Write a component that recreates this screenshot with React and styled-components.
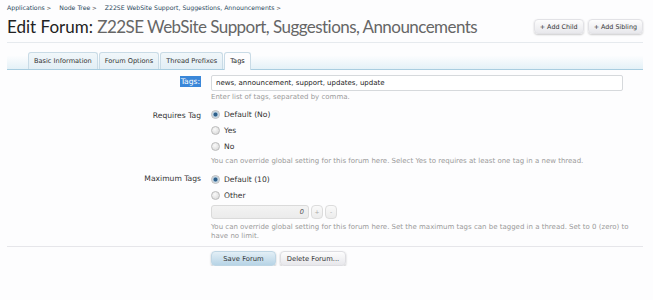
import React from "react";
import styled, { createGlobalStyle } from "styled-components";

const Global = createGlobalStyle`
  html, body { margin: 0; padding: 0; background: #fdfdfe; }
  body { font-family: "DejaVu Sans", Verdana, sans-serif; color: #222; }
`;

const Page = styled.div`
  padding: 3px 10px 0 7px;
  width: 636px;
`;

const Crumbs = styled.div`
  display: flex;
  gap: 8px;
  font-size: 6.2px;
  line-height: 10px;
  color: #2b485c;
`;

const Crumb = styled.span`
  &::after { content: " >"; font-size: 5.6px; color: #555; }
`;

const TitleBar = styled.div`
  display: flex;
  align-items: flex-start;
  justify-content: space-between;
  margin-top: 3px;
  padding-bottom: 5px;
  border-bottom: 1px solid #e6eaee;
`;

const Title = styled.h1`
  margin: 0;
  font-family: Lato, "Open Sans", sans-serif;
  font-weight: 400;
  font-size: 17px;
  line-height: 21px;
  color: #666;
  b { font-weight: 400; color: #222; }
  span { letter-spacing: -0.55px; }
`;

const TopButtons = styled.div`
  display: flex;
  gap: 4px;
  margin-top: 3px;
`;

const SmallButton = styled.button`
  font-family: "DejaVu Sans", sans-serif;
  font-size: 6.4px;
  color: #333;
  height: 15px;
  padding: 0 5px;
  border: 1px solid #e2e2e6;
  border-radius: 4px;
  background: linear-gradient(#fdfdfd, #e8e8ec);
  box-shadow: 0 1px 2px rgba(0,0,0,0.2);
`;

const Tabs = styled.div`
  display: flex;
  align-items: flex-end;
  gap: 1px;
  margin-top: 9px;
  padding-left: 21px;
  height: 17px;
  border-bottom: 1px solid #a9cde0;
  background: linear-gradient(#fdfdfe 20%, #e4f1f7);
`;

const Tab = styled.div`
  font-size: 6.6px;
  padding: 0 5px;
  border: 1px solid #c9dbe6;
  border-bottom: none;
  border-radius: 3px 3px 0 0;
  color: ${p => (p.$active ? "#222" : "#333")};
  background: ${p => (p.$active ? "#fdfdfe" : "linear-gradient(#f1f7fa, #e2eef5)")};
  margin-bottom: ${p => (p.$active ? "-1px" : "0")};
  height: ${p => (p.$active ? "17px" : "16px")};
  line-height: ${p => (p.$active ? "17px" : "16px")};
`;

const Form = styled.div`
  display: grid;
  grid-template-columns: 194px 1fr;
  column-gap: 10px;
  margin-top: 5px;
`;

const Label = styled.div`
  text-align: right;
  font-size: 7.6px;
  color: #333;
  padding-top: ${p => p.$pt || 0}px;
  line-height: 12px;
`;

const Selected = styled.span`
  background: #3a87d9;
  color: #fff;
  padding: 1px 1px;
`;

const Controls = styled.div`
  display: flex;
  flex-direction: column;
  padding-right: 20px;
  margin-top: ${p => p.$mt || 0}px;
`;

const TextInput = styled.div`
  height: 14px;
  border: 1px solid #d6d9dc;
  border-radius: 2px;
  background: #fff;
  font-size: 7px;
  line-height: 14px;
  padding-left: 4px;
  color: #222;
`;

const Hint = styled.div`
  font-size: 7px;
  line-height: 9px;
  color: #9a9a9a;
  margin-top: ${p => p.$mt || 0}px;
  margin-right: -14px;
`;

const Radio = styled.div`
  display: flex;
  align-items: center;
  gap: 4px;
  height: 16px;
  font-size: 7.6px;
  color: #333;
`;

const Dot = styled.span`
  width: 7px;
  height: 7px;
  border-radius: 50%;
  border: 1px solid #bbb;
  background: ${p =>
    p.$on
      ? "radial-gradient(circle, #2d5f8a 0 1.6px, #9ab6cc 2.2px, #e4ecf2 3.5px)"
      : "radial-gradient(circle at 40% 35%, #fafafa, #d4d4d4)"};
`;

const Spinner = styled.div`
  display: flex;
  align-items: center;
  gap: 2px;
  height: 14px;
  margin-top: 2px;
`;

const NumberBox = styled.div`
  width: 92px;
  height: 12px;
  border: 1px solid #dadada;
  border-radius: 3px;
  background: linear-gradient(#f3f3f3, #ebebeb);
  font-size: 6.6px;
  font-style: italic;
  color: #555;
  text-align: right;
  padding-right: 4px;
  line-height: 12px;
`;

const SpinBtn = styled.div`
  width: 10px;
  height: 12px;
  border: 1px solid #dcdcdc;
  border-radius: 4px;
  background: linear-gradient(#fafafa, #ececec);
  font-size: 6px;
  color: #aaa;
  text-align: center;
  line-height: 12px;
`;

const Footer = styled.div`
  margin-top: 5px;
  border-top: 1px solid #e6e6ea;
  padding: 4px 0 0 204px;
  display: flex;
  gap: 4px;
`;

const FormButton = styled.button`
  font-family: "DejaVu Sans", sans-serif;
  font-size: 6.8px;
  color: #333;
  height: 15px;
  padding: 0;
  width: ${p => p.$w}px;
  border: 1px solid ${p => (p.$primary ? "#bfd6e4" : "#dedee2")};
  border-radius: 4px;
  background: ${p =>
    p.$primary
      ? "linear-gradient(#e3eff6, #b7d4e6)"
      : "linear-gradient(#fdfdfd, #e7e7eb)"};
  box-shadow: 0 1px 2px rgba(0,0,0,0.25);
`;

export default function App() {
  return (
    <>
      <Global />
      <Page>
        <Crumbs>
          <Crumb>Applications</Crumb>
          <Crumb>Node Tree</Crumb>
          <Crumb>Z22SE WebSite Support, Suggestions, Announcements</Crumb>
        </Crumbs>
        <TitleBar>
          <Title>
            <b>Edit Forum:</b> <span>Z22SE WebSite Support, Suggestions, Announcements</span>
          </Title>
          <TopButtons>
            <SmallButton>+ Add Child</SmallButton>
            <SmallButton>+ Add Sibling</SmallButton>
          </TopButtons>
        </TitleBar>
        <Tabs>
          <Tab>Basic Information</Tab>
          <Tab>Forum Options</Tab>
          <Tab>Thread Prefixes</Tab>
          <Tab $active>Tags</Tab>
        </Tabs>
        <Form>
          <Label $pt={1}>
            <Selected>Tags:</Selected>
          </Label>
          <Controls>
            <TextInput>news, announcement, support, updates, update</TextInput>
            <Hint $mt={2}>Enter list of tags, separated by comma.</Hint>
          </Controls>

          <Label $pt={8}>Requires Tag</Label>
          <Controls $mt={4}>
            <Radio><Dot $on />Default (No)</Radio>
            <Radio><Dot />Yes</Radio>
            <Radio><Dot />No</Radio>
            <Hint $mt={3}>You can override global setting for this forum here. Select Yes to requires at least one tag in a new thread.</Hint>
          </Controls>

          <Label $pt={7}>Maximum Tags</Label>
          <Controls $mt={5}>
            <Radio><Dot $on />Default (10)</Radio>
            <Radio><Dot />Other</Radio>
            <Spinner>
              <NumberBox>0</NumberBox>
              <SpinBtn>+</SpinBtn>
              <SpinBtn>-</SpinBtn>
            </Spinner>
            <Hint $mt={4}>You can override global setting for this forum here. Set the maximum tags can be tagged in a thread. Set to 0 (zero) to have no limit.</Hint>
          </Controls>
        </Form>
        <Footer>
          <FormButton $primary $w={65}>Save Forum</FormButton>
          <FormButton $w={66}>Delete Forum...</FormButton>
        </Footer>
      </Page>
    </>
  );
}
